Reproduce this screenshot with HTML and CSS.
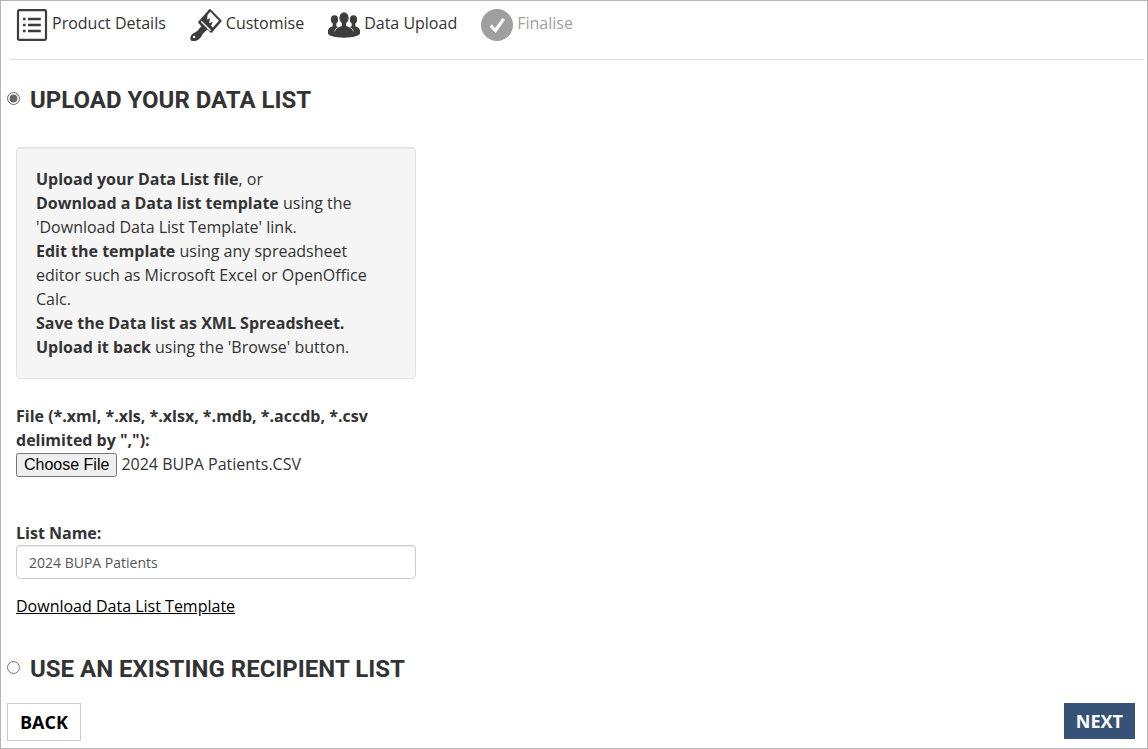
FILE: index.html
```html
<!DOCTYPE html>
<html lang="en">
<head>
<meta charset="utf-8">
<title>Data Upload</title>
<link rel="stylesheet" href="styles.css">
</head>
<body>
<form class="page">
  <nav class="steps" aria-label="Order steps">
    <div class="step">
      <svg class="step-icon" viewBox="0 0 32 32" aria-hidden="true">
        <rect x="2" y="1.2" width="28" height="29.6" rx="1.2" fill="none" stroke="#3d3d3d" stroke-width="2.2"/>
        <path d="M7 8.800h2.600v2.400H7zM7 14.800h2.600v2.400H7zM7 20.800h2.600v2.400H7zM12 8.800h12.800v2.400H12zM12 14.800h12.800v2.400H12zM12 20.800h12.800v2.400H12z" fill="#3d3d3d"/>
      </svg>
      <span>Product Details</span>
    </div>
    <div class="step">
      <svg class="step-icon" viewBox="0 0 32 32" aria-hidden="true">
        <path d="M20.500.3 31.400 11.300c.4.4.4.8 0 1.200L22 23.400c-.5.5-1 .5-1.500 0l-3-3-3.600 3.400c-1.600 1.400-1.900 2.900-3.400 5-2 2.700-6.500 4.200-9.200 3C-.5 29.800.3 26.300 3 24.500c2.200-1.500 3.600-1.700 5-3.300l3.300-3.900-2.800-3.200c-.5-.5-.5-1 0-1.500L19.300.3c.4-.4.8-.4 1.200 0z" fill="#3d3d3d"/>
        <path d="M20.300 2.800 29 11.700 22.800 18.600 21 16.700 23 12.800 19.200 14.300 20 9.300 16.900 10.500 17.600 5.800z" fill="#fff"/>
        <path d="M11.200 12.200 20.600 21.700" stroke="#fff" stroke-width="1.500"/>
        <circle cx="4.100" cy="28" r="1.200" fill="#fff"/>
      </svg>
      <span>Customise</span>
    </div>
    <div class="step">
      <svg class="step-icon" viewBox="0 0 32 32" aria-hidden="true">
        <g fill="#3d3d3d">
          <ellipse cx="6.500" cy="10.600" rx="3.600" ry="4.300"/>
          <ellipse cx="25.500" cy="10.600" rx="3.600" ry="4.300"/>
          <ellipse cx="16" cy="9" rx="4.600" ry="5.700"/>
          <path d="M4.700 13h3.600v4.200c1 .5 2 .8 3 1l2.500-1.400V12h4.400v4.800l2.500 1.400c1-.2 2-.5 3-1V13h3.600v4.200c2.500 1 4.700 2.200 4.700 4.300v2.800c0 2.400-7 4.400-16 4.400S0 26.700 0 24.300v-2.800c0-2.100 2.200-3.300 4.700-4.300z"/>
        </g>
        <path d="M6.800 22.300c.2-2 1.500-3.300 4.100-4.300M25.200 22.300c-.2-2-1.500-3.300-4.100-4.300" fill="none" stroke="#fff" stroke-width=".7"/>
      </svg>
      <span>Data Upload</span>
    </div>
    <div class="step step-pending">
      <svg class="step-icon" viewBox="0 0 32 32" aria-hidden="true">
        <circle cx="16" cy="16" r="16" fill="#9f9f9f"/>
        <path d="m9.700 16.500 4.800 5L22.700 9.900" fill="none" stroke="#fff" stroke-width="3.200"/>
      </svg>
      <span>Finalise</span>
    </div>
  </nav>

  <main class="content">
    <div class="option">
      <input class="radio" type="radio" name="source" id="upload" checked>
      <label class="option-title" for="upload">UPLOAD YOUR DATA LIST</label>
    </div>

    <section class="panel">
      <div class="well">
        <strong>Upload your Data List file</strong>, or<br>
        <strong>Download a Data list template</strong> using the 'Download Data List Template' link.<br>
        <strong>Edit the template</strong> using any spreadsheet editor such as Microsoft Excel or OpenOffice Calc.<br>
        <strong>Save the Data list as XML Spreadsheet.</strong><br>
        <strong>Upload it back</strong> using the 'Browse' button.
      </div>
      <label class="label" for="file">File (*.xml, *.xls, *.xlsx, *.mdb, *.accdb, *.csv delimited by ","):</label>
      <input class="file" type="file" id="file">
      <label class="label" for="name">List Name:</label>
      <input class="text" type="text" id="name" value="2024 BUPA Patients">
      <a class="link" href="#">Download Data List Template</a>
    </section>

    <div class="option">
      <input class="radio" type="radio" name="source" id="existing">
      <label class="option-title" for="existing">USE AN EXISTING RECIPIENT LIST</label>
    </div>
  </main>

  <footer class="actions">
    <button class="button button-back" type="button">BACK</button>
    <button class="button button-next" type="button">NEXT</button>
  </footer>
</form>
<script src="script.js"></script>
</body>
</html>
```
FILE: styles.css
```css
* {
  box-sizing: border-box;
}

body {
  margin: 0;
  background: #fff;
  color: #333;
  font: 16px/24px "Open Sans", sans-serif;
}

.page {
  min-height: 100vh;
  border: 1px solid #b5b5b5;
}

.steps {
  display: flex;
  flex-wrap: wrap;
  gap: 24px;
  margin: 0 3px 0 9px;
  padding: 8px 0 18px 6px;
  border-bottom: 1px solid #ddd;
}

.step {
  display: flex;
  gap: 4px;
  line-height: 28px;
}

.step-icon {
  width: 32px;
  height: 32px;
}

.step-pending {
  color: #9f9f9f;
}

.content {
  padding: 24px 6px 0;
}

.option {
  display: flex;
  align-items: center;
  gap: 10px;
}

.radio {
  width: 13px;
  height: 13px;
  margin: 0 0 3px;
  filter: grayscale(1);
}

.option-title {
  font: 700 24px/32px Roboto, sans-serif;
}

.panel {
  display: flex;
  flex-direction: column;
  align-items: flex-start;
  max-width: 400px;
  margin: 31px 9px 35px;
}

.well {
  width: 100%;
  margin-bottom: 25px;
  padding: 19px;
  border: 1px solid #e3e3e3;
  border-radius: 4px;
  background: #f5f5f5;
  box-shadow: inset 0 1px 1px rgba(0, 0, 0, 0.05);
}

.well strong,
.label {
  font-weight: 700;
}

.file {
  width: 100%;
  margin-bottom: 44px;
  color: #333;
  font: 16px/24px "Open Sans", sans-serif;
}

.file::file-selector-button {
  height: 24px;
  margin: 0 4px 0 0;
  padding: 1px 6px;
  font: 16px "Liberation Sans", sans-serif;
}

.text {
  width: 100%;
  height: 34px;
  margin-bottom: 15px;
  padding: 6px 12px;
  border: 1px solid #ccc;
  border-radius: 4px;
  background: #fff;
  box-shadow: inset 0 1px 1px rgba(0, 0, 0, 0.08);
  color: #555;
  font: 14px/20px "Open Sans", sans-serif;
}

.link {
  color: #000;
}

.actions {
  display: flex;
  justify-content: space-between;
  align-items: flex-start;
  padding: 18px 12px 7px 6px;
}

.button {
  padding: 6px 12px;
  border: 1px solid #ccc;
  border-radius: 0;
  background: #fff;
  color: #000;
  font: 700 18px/24px "Open Sans", sans-serif;
}

.button-next {
  border: 0;
  background: #375277;
  color: #fff;
}
```
FILE: script.js
```js
const selection = new DataTransfer();
selection.items.add(new File([""], "2024 BUPA Patients.CSV", { type: "text/csv" }));
document.getElementById("file").files = selection.files;
```
